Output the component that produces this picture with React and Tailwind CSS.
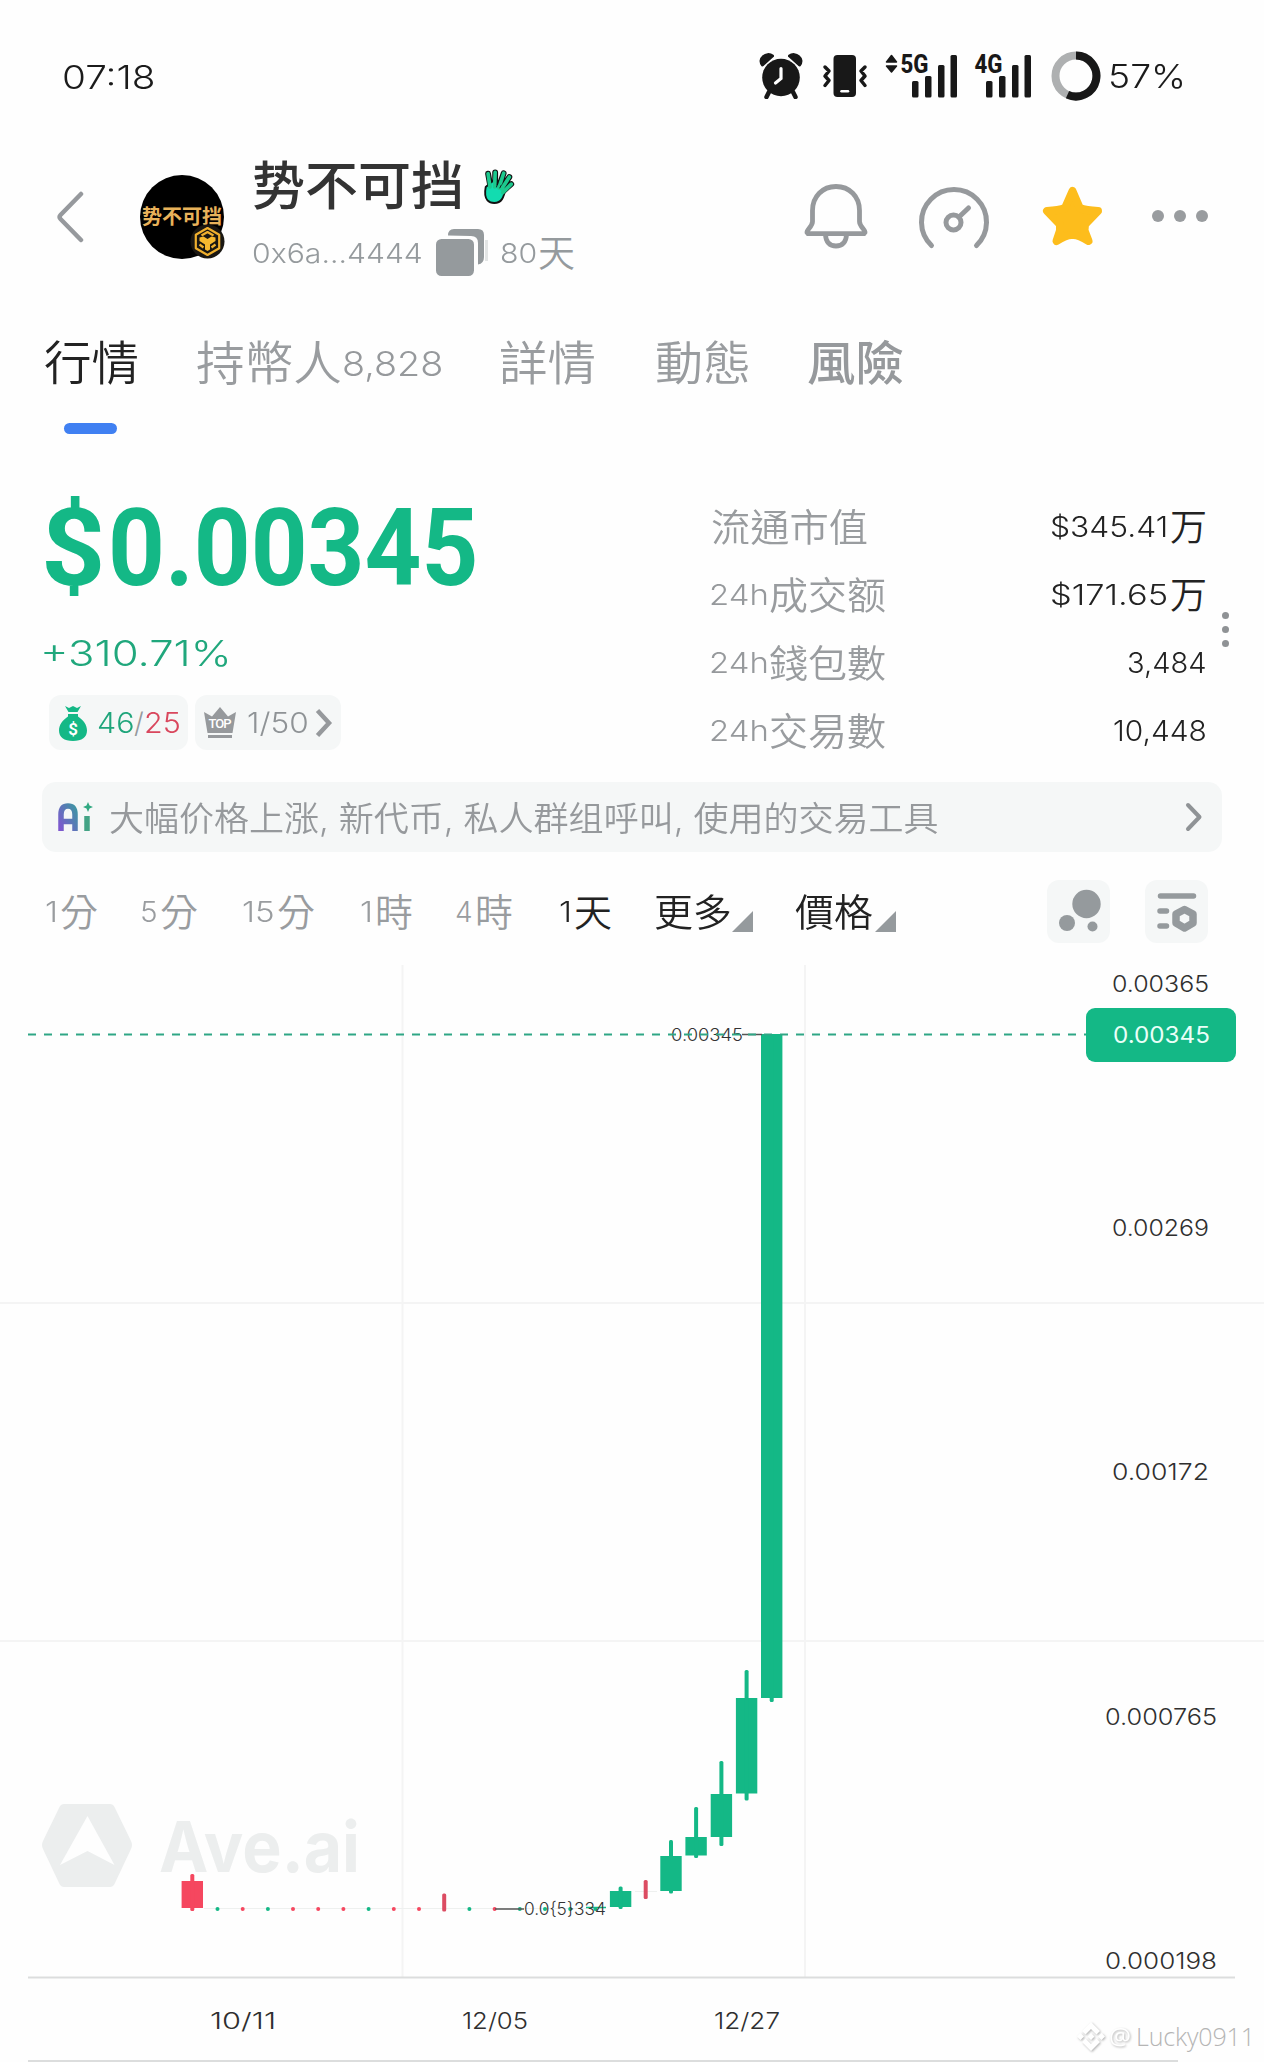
import { useLayoutEffect, useRef, useState } from 'react';
import clsx from 'clsx';

const TABS = [
  { label: '行情', box: 'ml-[44px] w-[95px]', tone: 'font-[350] text-[#222]' },
  { label: '持幣人', box: 'ml-[57px] w-[146px]', count: '8,828' },
  { label: '詳情', box: 'ml-[56px] w-[97px]' },
  { label: '動態', box: 'ml-[59px] w-[96px]' },
  { label: '風險', box: 'ml-[56px] w-[97px]', tone: 'font-medium text-[#96999c]' },
];

const STATS = [
  { label: '流通市值', labelBox: 'w-[157px]', value: '$345.41', valueBox: 'w-[118px]', unit: '万' },
  { prefix: '24h', label: '成交额', labelBox: 'w-[117px]', value: '$171.65', valueBox: 'w-[118px]', unit: '万' },
  { prefix: '24h', label: '錢包數', labelBox: 'w-[117px]', value: '3,484', valueBox: 'w-[80px]' },
  { prefix: '24h', label: '交易數', labelBox: 'w-[117px]', value: '10,448', valueBox: 'w-[94px]' },
];

const INTERVALS = [
  { num: '1', unit: '分', box: 'ml-[45px]', numBox: 'w-[13px]' },
  { num: '5', unit: '分', box: 'ml-[42px]', numBox: 'w-[18px]' },
  { num: '15', unit: '分', box: 'ml-[44px]', numBox: 'w-[33px]' },
  { num: '1', unit: '時', box: 'ml-[45px]', numBox: 'w-[13px]' },
  { num: '4', unit: '時', box: 'ml-[42px]', numBox: 'w-[18px]' },
  { num: '1', unit: '天', box: 'ml-[46px]', numBox: 'w-[13px]', active: true },
];

const UP = '#14b886';
const DOWN = '#f5475f';

// x, body top, body bottom, wick top, wick bottom
const CANDLES = [
  [192.3, 1881, 1908, 1874, 1911, DOWN],
  [620.6, 1891, 1907, 1886.5, 1909, UP],
  [671, 1856, 1891, 1840, 1893.5, UP],
  [696.1, 1837, 1855.5, 1807, 1858, UP],
  [721.4, 1794, 1837, 1761, 1846, UP],
  [746.6, 1698, 1793.5, 1670, 1800.5, UP],
  [771.7, 1034, 1698, 1034, 1702, UP],
];

const DOTS = [
  [217.5, UP], [242.7, DOWN], [267.9, UP], [293, DOWN], [318.2, DOWN], [343.4, DOWN],
  [368.6, UP], [393.8, DOWN], [419, DOWN], [469.4, UP], [494.6, DOWN], [519.8, UP],
  [545, UP], [570.2, UP], [595.4, UP],
];

const PRICES = [
  ['0.00365', 984, 1112, 97],
  ['0.00269', 1228, 1112, 97],
  ['0.00172', 1472, 1112, 97],
  ['0.000765', 1717, 1105, 112],
  ['0.000198', 1961, 1105, 112],
];

const DATES = [
  ['10/11', 210],
  ['12/05', 462],
  ['12/27', 714],
];

// Stretches its text horizontally so that it fills the box
function Fit({ className, children }) {
  const box = useRef(null);
  const inner = useRef(null);
  const [scale, setScale] = useState(1);

  useLayoutEffect(() => {
    setScale(box.current.clientWidth / inner.current.offsetWidth);
  }, [children]);

  return (
    <div ref={box} className={clsx('shrink-0 leading-none whitespace-nowrap', className)}>
      <span ref={inner} className="inline-block origin-left" style={{ transform: `scaleX(${scale})` }}>
        {children}
      </span>
    </div>
  );
}

function Signal({ label, arrows }) {
  return (
    <svg className={clsx('h-[50px] shrink-0', arrows ? 'w-[74px]' : 'w-[60px]')} viewBox={arrows ? '0 -2 74 50' : '14 -2 60 50'} fill="#181818">
      {arrows && <path d="M7.5 2.500l5 6.500h-10zM2.500 13h10l-5 6z" stroke="#181818" strokeWidth="1.500" strokeLinejoin="round" />}
      <text x="16.500" y="20" fontSize="25" fontWeight="800" fontFamily="Roboto, sans-serif" textLength="28" lengthAdjust="spacingAndGlyphs">
        {label}
      </text>
      <rect x="28" y="28" width="6.500" height="16.500" rx="1.500" />
      <rect x="41" y="23" width="6.500" height="21.500" rx="1.500" />
      <rect x="54" y="12" width="6.500" height="32.500" rx="1.500" />
      <rect x="66.500" y="2" width="6.500" height="42.500" rx="1.500" />
    </svg>
  );
}

function StatusBar() {
  return (
    <div className="mt-[49px] flex h-[54px] items-center text-[#1b1b1b]">
      <Fit className="mt-[3px] ml-[62px] w-[94px] text-[33px] font-[350]">07:18</Fit>

      <svg className="ml-[603px] h-[46px] w-[44px] shrink-0" viewBox="759 53 44 46" fill="#181818">
        <circle cx="781" cy="77.500" r="18.800" />
        <path d="M762.500 65c-5-6 4-13.500 10-9zM799.500 65c5-6-4-13.500-10-9z" stroke="#181818" strokeWidth="3" strokeLinejoin="round" />
        <path d="M769 92l-2.500 5M793 92l2.500 5" stroke="#181818" strokeWidth="4.500" strokeLinecap="round" />
        <path d="M781 68.500v10l-5.500 4.500" stroke="#fff" strokeWidth="3.200" fill="none" strokeLinecap="round" />
      </svg>

      <svg className="ml-[19px] h-[46px] w-[46px] shrink-0" viewBox="822 53 46 46" fill="none" stroke="#181818" strokeWidth="3.500" strokeLinecap="round" strokeLinejoin="round">
        <rect x="833.500" y="55" width="22.500" height="42" rx="4" fill="#181818" stroke="none" />
        <path d="M841.500 91.300h6.500" stroke="#fff" strokeWidth="2.500" />
        <path d="M825 67l4 4-4 5 4 4.500-4 5M865 67l-4 4 4 5-4 4.500 4 5" />
      </svg>

      <div className="ml-[16px] flex">
        <Signal label="5G" arrows />
      </div>
      <div className="ml-[14px] flex">
        <Signal label="4G" />
      </div>

      <svg className="ml-[19px] h-[50px] w-[50px] shrink-0" viewBox="0 0 50 50" fill="none" strokeWidth="8">
        <circle cx="25" cy="25" r="20.500" stroke="#aeb0b1" />
        <path d="M25 4.500a20.500 20.500 0 1 1-8.500 39.200" stroke="#181818" />
      </svg>
      <Fit className="mt-[1px] ml-[7px] w-[78px] text-[33px] font-light">57%</Fit>
    </div>
  );
}

function Avatar() {
  return (
    <div className="relative ml-[56px] flex h-[84px] w-[84px] shrink-0 items-center justify-center rounded-full bg-black">
      <Fit className="w-[80px] text-[20px] font-bold text-[#e8b25a]">势不可挡</Fit>
      <svg className="absolute right-[-1px] bottom-[0px] h-[35px] w-[35px]" viewBox="0 0 35 35">
        <circle cx="17.500" cy="17.500" r="17" fill="#1a1712" />
        <g fill="none" stroke="#f0b02e" strokeWidth="2.200" strokeLinejoin="round">
          <path d="M17.500 4l11.700 6.700v13.600L17.500 31 5.800 24.300V10.700z" />
          <path d="M11.500 11.500l6-3.500 6 3.500M9.500 20.500l4 3M25.500 20.500l-4 3" />
        </g>
        <path d="M9.500 13.500l4-1 4 2.500 4-2.500 4 1v3.500l-5.500 3.500v5l-2.500 1.500-2.500-1.500v-5L9.500 17z" fill="#f7b92f" />
      </svg>
    </div>
  );
}

function Header() {
  return (
    <div className="mt-[47px] flex h-[134px] items-center text-[#959a9d]">
      <svg className="ml-[54px] h-[56px] w-[30px] shrink-0" viewBox="0 0 30 56" fill="none" stroke="#96999d" strokeWidth="4.500" strokeLinecap="round" strokeLinejoin="round">
        <path d="M27 5L6.500 26q-2 2 0 4L27 51" />
      </svg>

      <Avatar />

      <div className="ml-[28px] w-[330px]">
        <div className="flex h-[54px] items-center">
          <Fit className="mt-[3px] w-[212px] text-[52px] font-medium text-[#333]">势不可挡</Fit>
          <svg className="ml-[17px] h-[38px] w-[34px]" viewBox="0 0 36 40" fill="none" strokeLinecap="round" strokeLinejoin="round">
            <path d="M9.500 18L7.500 7M15 17V5.500M20 18l4-11.500M23 21l7-10.500M24 25l8-7" stroke="#111" strokeWidth="6.200" />
            <path d="M5 21C2 36 10 38 14 38c8 0 10-6 12-15L12 15z" fill="#12dcb0" stroke="#111" strokeWidth="2" />
            <path d="M9.500 21L7.500 7M14.500 21L15 5.500M19 22l5-15.500M22 23l8-12.500M23 27l9-9" stroke="#1cc98e" strokeWidth="3.900" />
            <path d="M17.500 17l-1 4M21.500 19l-1.500 3" stroke="#111" />
          </svg>
        </div>
        <div className="mt-[15px] flex h-[48px] items-center">
          <Fit className="mt-[3px] w-[171px] text-[27px] font-light">0x6a...4444</Fit>
          <svg className="ml-[13px] h-[48px] w-[52px] shrink-0" viewBox="0 0 52 48" fill="#959a9d">
            <path d="M49 12h3v21h-3z" fill="#e3e5e5" />
            <path d="M12 7.500Q12 1 18 1h24q6 0 6 6v22q0 6.500-6 7.500V15q0-7-7-7z" />
            <rect y="11" width="38" height="37" rx="5.500" />
          </svg>
          <Fit className="mt-[3px] ml-[12px] w-[37px] text-[27px] font-light">80</Fit>
          <Fit className="mt-[3px] ml-[1px] w-[37px] text-[37px] font-[350]">天</Fit>
        </div>
      </div>

      <svg className="ml-[220px] h-[68px] w-[66px] shrink-0" viewBox="802 184 66 68" fill="none" stroke="#96999c" strokeWidth="4.800" strokeLinejoin="round">
        <path d="M836 187.500c-13.500 0-23.500 10-23.500 24v11c0 5-6 8.500-5.500 11q.5 1.200 2 1.200h54q1.500 0 2-1.200c.5-2.500-5.500-6-5.500-11v-11c0-14-10-24-23.500-24z" />
        <path d="M825.500 235c0 8 4.500 12 10.500 12s10.500-4 10.500-12" />
      </svg>
      <svg className="ml-[48px] h-[68px] w-[74px] shrink-0" viewBox="916 183 74 68" fill="none" stroke="#96999c" strokeWidth="5" strokeLinecap="round">
        <path d="M931.500 245.500A32.500 32.500 0 1 1 976.500 245.500" />
        <circle cx="953.500" cy="222.500" r="7.500" />
        <path d="M959.500 216.500l9-8.500" />
      </svg>
      <svg className="ml-[48px] h-[68px] w-[66px] shrink-0" viewBox="1038 182.500 66 68" fill="#fdbd1c" stroke="#fdbd1c" strokeWidth="8" strokeLinejoin="round">
        <path d="M1072.500 190.500l7.300 17q6 2.500 18.200 3l-13 13.500-.5 6 4 10.500q-11-6.500-16-6-5-.5-16 6l3.500-10.500v-6L1047 210.500q12-.5 18-3z" />
      </svg>
      <div className="mt-[-2px] ml-[48px] flex gap-[10px]">
        <i className="h-3 w-3 rounded-full bg-[#999c9f]" />
        <i className="h-3 w-3 rounded-full bg-[#999c9f]" />
        <i className="h-3 w-3 rounded-full bg-[#999c9f]" />
      </div>
    </div>
  );
}

function Tabs() {
  return (
    <nav className="mt-[41px] h-[109px]">
      <div className="flex h-[75px] items-center">
        {TABS.map((tab) => (
          <div key={tab.label} className="flex items-center">
            <Fit className={clsx('text-[47px]', tab.box, tab.tone || 'font-[350] text-[#999c9f]')}>{tab.label}</Fit>
            {tab.count && <Fit className="mt-[2px] w-[101px] text-[34px] font-light text-[#96999c]">{tab.count}</Fit>}
          </div>
        ))}
      </div>
      <div className="mt-[23px] ml-[64px] h-[11px] w-[53px] rounded-full bg-[#4080f2]" />
    </nav>
  );
}

function Summary() {
  return (
    <section className="mt-[58px] flex h-[276px]">
      <div className="w-[710px]">
        <div className="mt-[3px] flex font-['Roboto',sans-serif] text-[107px] font-bold text-[#14b886]">
          <Fit className="ml-[41px] w-[64px]">$</Fit>
          <Fit className="ml-[3px] w-[370px]">0.00345</Fit>
        </div>
        <Fit className="mt-[34px] ml-[40px] w-[192px] text-[35px] font-light text-[#20a77c]">+310.71%</Fit>
        <div className="mt-[24px] ml-[49px] flex gap-[7px]">
          <div className="flex h-[55px] w-[139px] items-center rounded-xl bg-[#f5f7f7] text-[28px] font-[350]">
            <svg className="ml-[9px] h-[38px] w-[30px] shrink-0" viewBox="0 0 30 38" fill="#14b886">
              <path d="M7 2l4 2 4-2 4 2 4-2-3.500 6h-9zM10 10h10v2.500c5.500 3.500 9 8.500 9 14C29 33 24 37 15 37S1 33 1 26.500c0-5.500 3.500-10.500 9-14z" />
              <text x="15" y="31" fill="#fff" fontSize="17" fontWeight="600" textAnchor="middle" fontFamily="Roboto, sans-serif">$</text>
            </svg>
            <Fit className="ml-[9px] w-[37px] text-[#1fa57b]">46</Fit>
            <Fit className="w-[10px] font-light text-[#96999c]">/</Fit>
            <Fit className="w-[37px] text-[#d9475d]">25</Fit>
          </div>
          <div className="flex h-[55px] w-[146px] items-center rounded-xl bg-[#f5f7f7] text-[28px] text-[#8f9396]">
            <svg className="ml-[8px] h-[34px] w-[34px] shrink-0" viewBox="0 0 34 34" fill="#96999c">
              <path d="M1 6l8 4.500L17 1l8 9.500L33 6l-3.500 21h-25zM5 29h24v3H5z" />
              <text x="5.500" y="21.500" fill="#fff" fontSize="13" fontWeight="500" textLength="23" fontFamily="Roboto, sans-serif">TOP</text>
            </svg>
            <Fit className="ml-[10px] w-[62px] font-light">1/50</Fit>
            <svg className="ml-[5px] h-[32px] w-[20px] shrink-0" viewBox="0 0 20 32" fill="none" stroke="#96999c" strokeWidth="4.500">
              <path d="M3.500 3.500L15 16 3.500 28.500" />
            </svg>
          </div>
        </div>
      </div>

      <div className="mt-[1px] w-[497px]">
        {STATS.map((s) => (
          <div key={s.label} className="flex h-[68px] items-center">
            {s.prefix && <Fit className="ml-[-1px] w-[60px] text-[28px] font-light text-[#96999c]">{s.prefix}</Fit>}
            <Fit className={clsx('text-[38px] font-[350] text-[#999c9f]', s.labelBox, !s.prefix && 'ml-[1px]')}>{s.label}</Fit>
            <div className="ml-auto flex items-center font-[350] text-[#222]">
              <Fit className={clsx('text-[28px]', s.valueBox)}>{s.value}</Fit>
              {s.unit && <Fit className="ml-[2px] w-[37px] text-[37px]">{s.unit}</Fit>}
            </div>
          </div>
        ))}
      </div>

      <div className="mt-[120px] ml-[15px] flex flex-col gap-[7px]">
        <i className="h-[7px] w-[7px] rounded-full bg-[#8f9295]" />
        <i className="h-[7px] w-[7px] rounded-full bg-[#8f9295]" />
        <i className="h-[7px] w-[7px] rounded-full bg-[#8f9295]" />
      </div>
    </section>
  );
}

function AiBar() {
  return (
    <div className="mt-[14px] ml-[42px] flex h-[70px] w-[1180px] items-center rounded-[14px] bg-[#f5f7f7]">
      <svg className="ml-[15px] h-[32px] w-[36px] shrink-0" viewBox="0 0 36 32" fill="none">
        <defs>
          <linearGradient id="ai" x1="0" y1="1" x2="1" y2="0">
            <stop offset="0" stopColor="#7e57cf" />
            <stop offset="1" stopColor="#3f93a4" />
          </linearGradient>
        </defs>
        <path d="M4 30V13.500Q4 5 11 5t7 8.500V30M4 20.500h14" stroke="url(#ai)" strokeWidth="5.500" />
        <path d="M30 15v15" stroke="#43a385" strokeWidth="5.500" />
        <path d="M31 1l1.500 3.500L36 6l-3.500 1.500L31 11l-1.500-3.500L26 6l3.500-1.500z" fill="#31a982" />
      </svg>
      <Fit className="mt-[4px] ml-[16px] w-[829px] text-[34px] font-[350] text-[#96999c]">
        大幅价格上涨, 新代币, 私人群组呼叫, 使用的交易工具
      </Fit>
      <svg className="ml-auto mr-[17px] h-[32px] w-[20px]" viewBox="0 0 20 32" fill="none" stroke="#8f9396" strokeWidth="4" strokeLinecap="round" strokeLinejoin="round">
        <path d="M3 4l11.500 12L3 28" />
      </svg>
    </div>
  );
}

function Toolbar() {
  return (
    <div className="mt-[28px] flex h-[63px] items-center">
      {INTERVALS.map((it, i) => (
        <div key={i} className={clsx('flex items-center font-[350]', it.box, it.active ? 'text-[#222]' : 'text-[#999c9f]')}>
          <Fit className={clsx('text-[28px]', it.numBox)}>{it.num}</Fit>
          <Fit className="ml-[2px] w-[38px] text-[38px]">{it.unit}</Fit>
        </div>
      ))}
      <Fit className="ml-[42px] w-[78px] text-[38px] font-[350] text-[#222]">更多</Fit>
      <i className="mt-[20px] h-[21px] w-[21px] bg-[#959a9d] [clip-path:polygon(100%_0,100%_100%,0_100%)]" />
      <Fit className="ml-[42px] w-[78px] text-[38px] font-[350] text-[#222]">價格</Fit>
      <i className="mt-[20px] ml-[2px] h-[21px] w-[21px] bg-[#959a9d] [clip-path:polygon(100%_0,100%_100%,0_100%)]" />
      <div className="ml-auto mr-[56px] flex gap-[35px]">
        <div className="rounded-xl bg-[#f5f7f7]">
          <svg className="h-[63px] w-[63px]" viewBox="0 0 63 63" fill="#959a9d">
            <circle cx="39.500" cy="24" r="14.200" />
            <circle cx="20" cy="43" r="8" />
            <circle cx="45.500" cy="46.500" r="5" />
          </svg>
        </div>
        <div className="rounded-xl bg-[#f5f7f7]">
          <svg className="h-[63px] w-[63px]" viewBox="0 0 63 63" fill="none" stroke="#959a9d" strokeLinecap="round" strokeLinejoin="round">
            <path d="M15.500 16h33M15 31h6.500M15 46h6.500" strokeWidth="5.500" />
            <path d="M39.500 29.500l8.500 4.500v9l-8.500 5-8.500-5v-9z" strokeWidth="7.500" />
          </svg>
        </div>
      </div>
    </div>
  );
}

function Chart() {
  return (
    <svg className="block h-[1119px] w-[1264px]" viewBox="0 943 1264 1119" fontFamily="Inter, sans-serif">
      <path d="M402.500 965v1012M805 965v1012M0 1303h1264M0 1641h1264" stroke="#f4f4f4" strokeWidth="2" />
      <path d="M28 1977.500h1207M28 2061h1150" stroke="#dcdddd" strokeWidth="2" />

      <path
        fillRule="evenodd"
        fill="#eceeee"
        d="M64 1804h46q3 0 4.500 3l16.500 34q2 4 0 8l-16.500 35q-1.500 3-4.500 3H64q-3 0-4.500-3L43 1849q-2-4 0-8l16.500-34q1.500-3 4.500-3zM87.500 1816L60 1865l27.500-14 27 14z"
      />
      <text x="159" y="1872" fontSize="70" fontWeight="700" fill="#eceeee" textLength="201" lengthAdjust="spacingAndGlyphs">
        Ave.ai
      </text>

      {CANDLES.map(([x, top, bottom, high, low, color]) => (
        <g key={x} fill={color}>
          <rect x={x - 10.7} y={top} width="21.400" height={bottom - top} />
          <rect x={x - 2} y={high} width="4" height={low - high} rx="1.500" />
        </g>
      ))}
      <path d="M204 1908.500h400M635 1891.500h22" stroke="#eef0ef" />
      <rect x="442.200" y="1893.500" width="4" height="18" rx="1.500" fill="#dc4c62" />
      <rect x="643.700" y="1880" width="4" height="19" rx="1.500" fill="#dc4c62" />
      {DOTS.map(([x, color]) => (
        <circle key={x} cx={x} cy="1909" r="2" fill={color} />
      ))}
      <path d="M586 1907.500h20" stroke={UP} strokeWidth="1.500" />

      <text x="671" y="1040.500" fontSize="17" fontWeight="300" fill="#333" textLength="72" lengthAdjust="spacingAndGlyphs">0.00345</text>
      <path d="M742 1034.500h20M495 1909h29" stroke="#555" strokeWidth="1.300" />
      <text x="524" y="1915" fontSize="17" fontWeight="300" fill="#333" textLength="82" lengthAdjust="spacingAndGlyphs">{'0.0{5}334'}</text>
      <path d="M28 1034.500h1058" stroke="#2fa685" strokeWidth="2" strokeDasharray="8 8" />

      {PRICES.map(([label, y, x, width]) => (
        <text key={label} x={x} y={y + 8.200} fontSize="22.500" fontWeight="350" fill="#2f2f2f" textLength={width} lengthAdjust="spacingAndGlyphs">
          {label}
        </text>
      ))}
      <rect x="1086" y="1008" width="150" height="54" rx="9" fill={UP} />
      <text x="1113" y="1043" fontSize="22.500" fill="#eafff8" textLength="97" lengthAdjust="spacingAndGlyphs">0.00345</text>

      {DATES.map(([label, x]) => (
        <text key={label} x={x} y="2029" fontSize="22.500" fontWeight="350" fill="#2f2f2f" textLength="66" lengthAdjust="spacingAndGlyphs">
          {label}
        </text>
      ))}

      <g className="drop-shadow-[1px_1px_1px_rgba(0,0,0,0.3)]" fill="#fff">
        <path d="M1091 2022l9 9-3.500 3.500-5.500-5.500-5.500 5.500-3.500-3.500zM1091 2051l9-9-3.500-3.500-5.500 5.500-5.500-5.500-3.500 3.500zM1091 2033l3.500 3.500-3.500 3.500-3.500-3.500zM1080.500 2033l3.500 3.500-3.500 3.500-3.500-3.500zM1101.500 2033l3.500 3.500-3.500 3.500-3.500-3.500z" />
        <text x="1109" y="2045" fontSize="24" fontFamily="Open Sans, sans-serif" textLength="22" lengthAdjust="spacingAndGlyphs">@</text>
      </g>
      <text x="1136" y="2046" fontSize="25" fontWeight="300" fill="#b5b5b5" fontFamily="Open Sans, sans-serif" textLength="119" lengthAdjust="spacing">Lucky0911</text>
    </svg>
  );
}

export default function App() {
  return (
    <div className="flow-root h-[2062px] w-[1264px] overflow-hidden bg-[#fefefe] font-['Inter','Noto_Sans_CJK_TC',sans-serif]">
      <StatusBar />
      <Header />
      <Tabs />
      <Summary />
      <AiBar />
      <Toolbar />
      <Chart />
    </div>
  );
}
